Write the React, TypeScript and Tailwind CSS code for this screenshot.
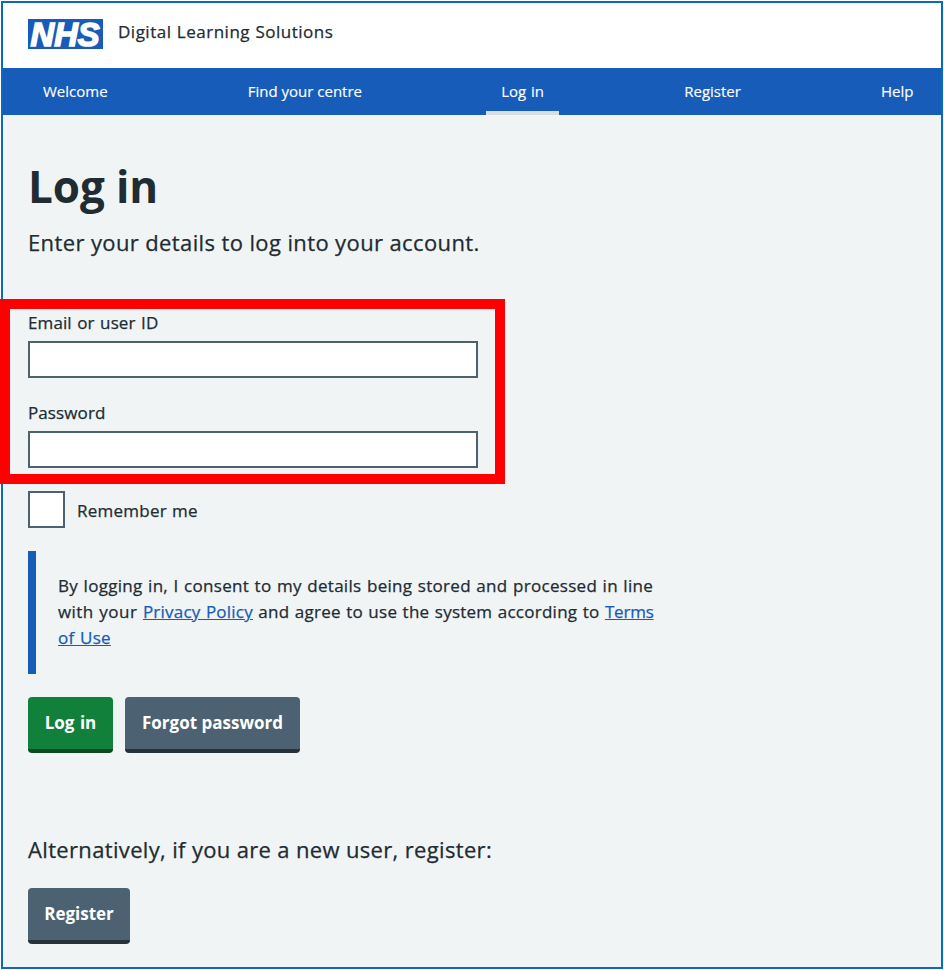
import React from "react";

function NhsLogo() {
  return (
    <svg className="block h-[30px] w-[75px] overflow-visible" viewBox="0 0 75 30" role="img" aria-label="NHS">
      <rect width="75" height="30" fill="#175cb8" />
      <text
        x="2.6"
        y="26.8"
        textLength="69"
        lengthAdjust="spacingAndGlyphs"
        fill="#fff"
        stroke="#fff"
        strokeWidth="1.6"
        fontFamily="'Liberation Sans', Arial, sans-serif"
        fontSize="33"
        fontWeight="700"
        fontStyle="italic"
      >
        NHS
      </text>
    </svg>
  );
}

const strong = "[-webkit-text-stroke:0.25px_currentColor]";

function Field({ label, type }: { label: string; type: string }) {
  return (
    <label className="block h-[90px]">
      <span className={`block h-[31px] text-[17px] leading-[26px] tracking-[0.1px] [word-spacing:1px] ${strong}`}>{label}</span>
      <input type={type} className="block h-[37px] w-[450px] border-2 border-[#4c6272] bg-white outline-none" />
    </label>
  );
}

export default function App() {
  return (
    <div className="h-[970px] w-[944px] bg-white p-px font-['Open_Sans','Noto_Sans',sans-serif] text-[#212b32]">
      <div className="h-[968px] w-[942px] border-2 border-[#0b69bf] bg-[#f0f4f5]">
        <header className="flex h-[65px] items-start bg-white pl-[25px] pt-4">
          <NhsLogo />
          <span className={`ml-[15px] text-[17px] leading-[26px] tracking-[0.5px] [word-spacing:0.5px] ${strong}`}>Digital Learning Solutions</span>
        </header>
        <nav className="flex h-[47px] justify-between bg-[#175cb8] pl-[25px] pr-[12.5px] text-[15px] leading-[47px] text-white [-webkit-text-stroke:0.15px_currentColor]">
          <a className="px-[15px]">Welcome</a>
          <a className="px-[15px]">Find your centre</a>
          <a className="-ml-px border-b-4 border-[#d8dde0] px-[15px] [word-spacing:1px]">Log in</a>
          <a className="px-[15px]">Register</a>
          <a className="px-[15px]">Help</a>
        </nav>
        <main className="pl-[25px] pt-[44px]">
          <h1 className="h-[67px] text-[44px] font-bold leading-[54px] tracking-[-0.1px]">Log in</h1>
          <p className={`h-[84px] text-[22px] leading-[32px] tracking-[0.38px] ${strong}`}>Enter your details to log into your account.</p>
          <form>
            <div className="relative h-[181px]">
              <Field label="Email or user ID" type="text" />
              <Field label="Password" type="password" />
              <div className="pointer-events-none absolute -left-[28px] -top-[11px] h-[185px] w-[505px] border-10 border-[#ff0000]" />
            </div>
            <label className="flex h-[60px] items-start">
              <span className="h-[37px] w-[37px] border-2 border-[#4c6272] bg-white" />
              <span className={`ml-[12px] text-[17px] leading-[40px] tracking-[0.25px] [word-spacing:0.5px] ${strong}`}>Remember me</span>
            </label>
            <div className="mb-[23px] h-[123px] border-l-8 border-[#175cb8] pl-[22px] pt-[22px]">
              <p className={`text-[17px] leading-[26px] tracking-[0.3px] [word-spacing:0.75px] ${strong}`}>
                By logging in, I consent to my details being stored and processed in line
                <br />
                <span className="tracking-[0.45px]">with your </span>
                <a className="tracking-[0.22px] text-[#175cb8] underline">Privacy Policy</a>
                <span className="tracking-[0.25px]"> and agree to use the system according to </span>
                <a className="text-[#175cb8] underline">
                  <span className="tracking-[-0.2px]">Terms</span>
                  <br />
                  of Use
                </a>
              </p>
            </div>
            <div className="flex gap-3">
              <button className="h-[56px] w-[85px] rounded-[4px] border-b-4 border-[#0b4a24] bg-[#10803a] text-[17px] font-bold text-white [word-spacing:1px]">Log in</button>
              <button className="h-[56px] w-[175px] rounded-[4px] border-b-4 border-[#263139] bg-[#4c6272] text-[17px] font-bold text-white">Forgot password</button>
            </div>
          </form>
          <p className={`mt-[80px] h-[55px] text-[22px] leading-[32px] tracking-[0.34px] ${strong}`}>Alternatively, if you are a new user, register:</p>
          <button className="h-[56px] w-[102px] rounded-[4px] border-b-4 border-[#263139] bg-[#4c6272] text-[17px] font-bold text-white">Register</button>
        </main>
      </div>
    </div>
  );
}
